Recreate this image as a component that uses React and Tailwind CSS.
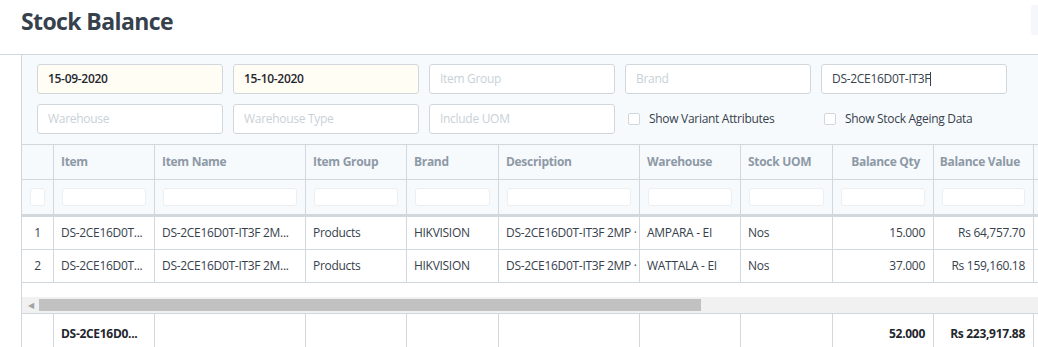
import React from 'react';

const font = { fontFamily: '"Open Sans", "Noto Sans", sans-serif' };

const columns = [
  { key: 'idx', label: '', w: 'w-[32px]' },
  { key: 'item', label: 'Item', w: 'w-[101px]' },
  { key: 'name', label: 'Item Name', w: 'w-[151px]' },
  { key: 'group', label: 'Item Group', w: 'w-[101px]' },
  { key: 'brand', label: 'Brand', w: 'w-[92px]' },
  { key: 'desc', label: 'Description', w: 'w-[141px]' },
  { key: 'wh', label: 'Warehouse', w: 'w-[101px]' },
  { key: 'uom', label: 'Stock UOM', w: 'w-[92px]' },
  { key: 'qty', label: 'Balance Qty', w: 'w-[101px]', right: true },
  { key: 'value', label: 'Balance Value', w: 'w-[100px]', right: true },
];

const rows = [
  {
    idx: '1',
    item: 'DS-2CE16D0T...',
    name: 'DS-2CE16D0T-IT3F 2M...',
    group: 'Products',
    brand: 'HIKVISION',
    desc: 'DS-2CE16D0T-IT3F 2MP ·',
    wh: 'AMPARA - EI',
    uom: 'Nos',
    qty: '15.000',
    value: 'Rs 64,757.70',
  },
  {
    idx: '2',
    item: 'DS-2CE16D0T...',
    name: 'DS-2CE16D0T-IT3F 2M...',
    group: 'Products',
    brand: 'HIKVISION',
    desc: 'DS-2CE16D0T-IT3F 2MP ·',
    wh: 'WATTALA - EI',
    uom: 'Nos',
    qty: '37.000',
    value: 'Rs 159,160.18',
  },
];

function Field({ value, placeholder, dated }) {
  return (
    <div
      className={`w-[186px] h-[30px] rounded-[3px] border border-[#d1d8dd] flex items-center px-[10px] text-[12px] ${
        dated ? 'bg-[#fffdf4]' : 'bg-white'
      }`}
    >
      {value ? (
        <span className={dated ? 'font-semibold text-[#1f272e]' : 'text-[#36414c]'}>{value}</span>
      ) : (
        <span className="text-[#c9d1d8]">{placeholder}</span>
      )}
    </div>
  );
}

function Check({ label }) {
  return (
    <div className="w-[186px] h-[30px] flex items-center gap-[9px] pl-[3px] text-[12px] text-[#36414c]">
      <span className="w-[12px] h-[12px] rounded-[2px] border border-[#d1d8dd] bg-white"></span>
      <span>{label}</span>
    </div>
  );
}

export default function App() {
  return (
    <div className="w-[1038px] h-[347px] overflow-hidden bg-white tracking-[-0.3px]" style={font}>
      {/* page head */}
      <div className="h-[55px] border-b border-[#d1d8dd] flex items-start justify-between">
        <h1 className="pl-[21px] pt-[2px] text-[23px] font-bold text-[#36414c] leading-[38px] tracking-[-0.6px]">
          Stock Balance
        </h1>
        <div className="mt-[5px] w-[7px] h-[30px] rounded-l-[3px] bg-[#f5f7fa]"></div>
      </div>

      <div className="ml-[21px] border-l border-[#d1d8dd]">
        {/* filters */}
        <div className="bg-[#f7fafc] border-b border-[#d1d8dd] pl-[15px] pt-[9px] pb-[10px]">
          <div className="grid grid-cols-[repeat(5,186px)] gap-x-[10px] gap-y-[10px]">
            <Field value="15-09-2020" dated />
            <Field value="15-10-2020" dated />
            <Field placeholder="Item Group" />
            <Field placeholder="Brand" />
            <div className="w-[186px] h-[30px] rounded-[3px] border border-[#d1d8dd] bg-white flex items-center px-[10px] text-[12px] text-[#36414c]">
              DS-2CE16D0T-IT3F<span className="w-px h-[14px] bg-[#36414c]"></span>
            </div>
            <Field placeholder="Warehouse" />
            <Field placeholder="Warehouse Type" />
            <Field placeholder="Include UOM" />
            <Check label="Show Variant Attributes" />
            <Check label="Show Stock Ageing Data" />
          </div>
        </div>

        {/* table header */}
        <div className="flex bg-[#f7fafc] h-[35px] border-b border-[#d1d8dd]">
          {columns.map((c) => (
            <div
              key={c.key}
              className={`${c.w} shrink-0 border-r border-[#d1d8dd] flex items-center text-[12px] font-bold text-[#8d99a6] ${
                c.right ? 'justify-end pr-[13px]' : 'pl-[7px]'
              }`}
            >
              {c.label}
            </div>
          ))}
          <div className="flex-1"></div>
        </div>

        {/* filter row */}
        <div className="flex bg-[#f7fafc] h-[37px] border-b-[3px] border-[#d1d8dd]">
          {columns.map((c) => (
            <div key={c.key} className={`${c.w} shrink-0 border-r border-[#d1d8dd] flex items-center px-[8px]`}>
              <div className="w-full h-[18px] rounded-[3px] border border-[#ebeff2] bg-white"></div>
            </div>
          ))}
          <div className="flex-1"></div>
        </div>

        {/* body */}
        <div className="h-[80px]">
          {rows.map((r) => (
            <div key={r.idx} className="flex h-[33px] border-b border-[#d1d8dd] text-[12px] text-[#36414c]">
              {columns.map((c) => (
                <div
                  key={c.key}
                  className={`${c.w} shrink-0 border-r border-[#d1d8dd] flex items-center overflow-hidden whitespace-nowrap ${
                    c.key === 'idx' ? 'justify-center' : c.right ? 'justify-end pr-[8px]' : 'pl-[7px]'
                  }`}
                >
                  {r[c.key]}
                </div>
              ))}
              <div className="flex-1"></div>
            </div>
          ))}
        </div>

        {/* scrollbar */}
        <div className="h-[17px] bg-[#f1f1f1] flex items-center border-b border-[#d1d8dd]">
          <span className="w-[17px] flex justify-center text-[8px] text-[#a3a3a3]">◀</span>
          <div className="h-[12px] w-[662px] bg-[#c1c1c1]"></div>
        </div>

        {/* totals */}
        <div className="flex h-[40px] text-[12px] font-bold text-[#1f272e]">
          {columns.map((c) => (
            <div
              key={c.key}
              className={`${c.w} shrink-0 border-r border-[#d1d8dd] flex items-center whitespace-nowrap overflow-hidden ${
                c.right ? 'justify-end pr-[8px]' : 'pl-[7px]'
              }`}
            >
              {c.key === 'item' ? 'DS-2CE16D0...' : c.key === 'qty' ? '52.000' : c.key === 'value' ? 'Rs 223,917.88' : ''}
            </div>
          ))}
          <div className="flex-1"></div>
        </div>
      </div>
    </div>
  );
}
